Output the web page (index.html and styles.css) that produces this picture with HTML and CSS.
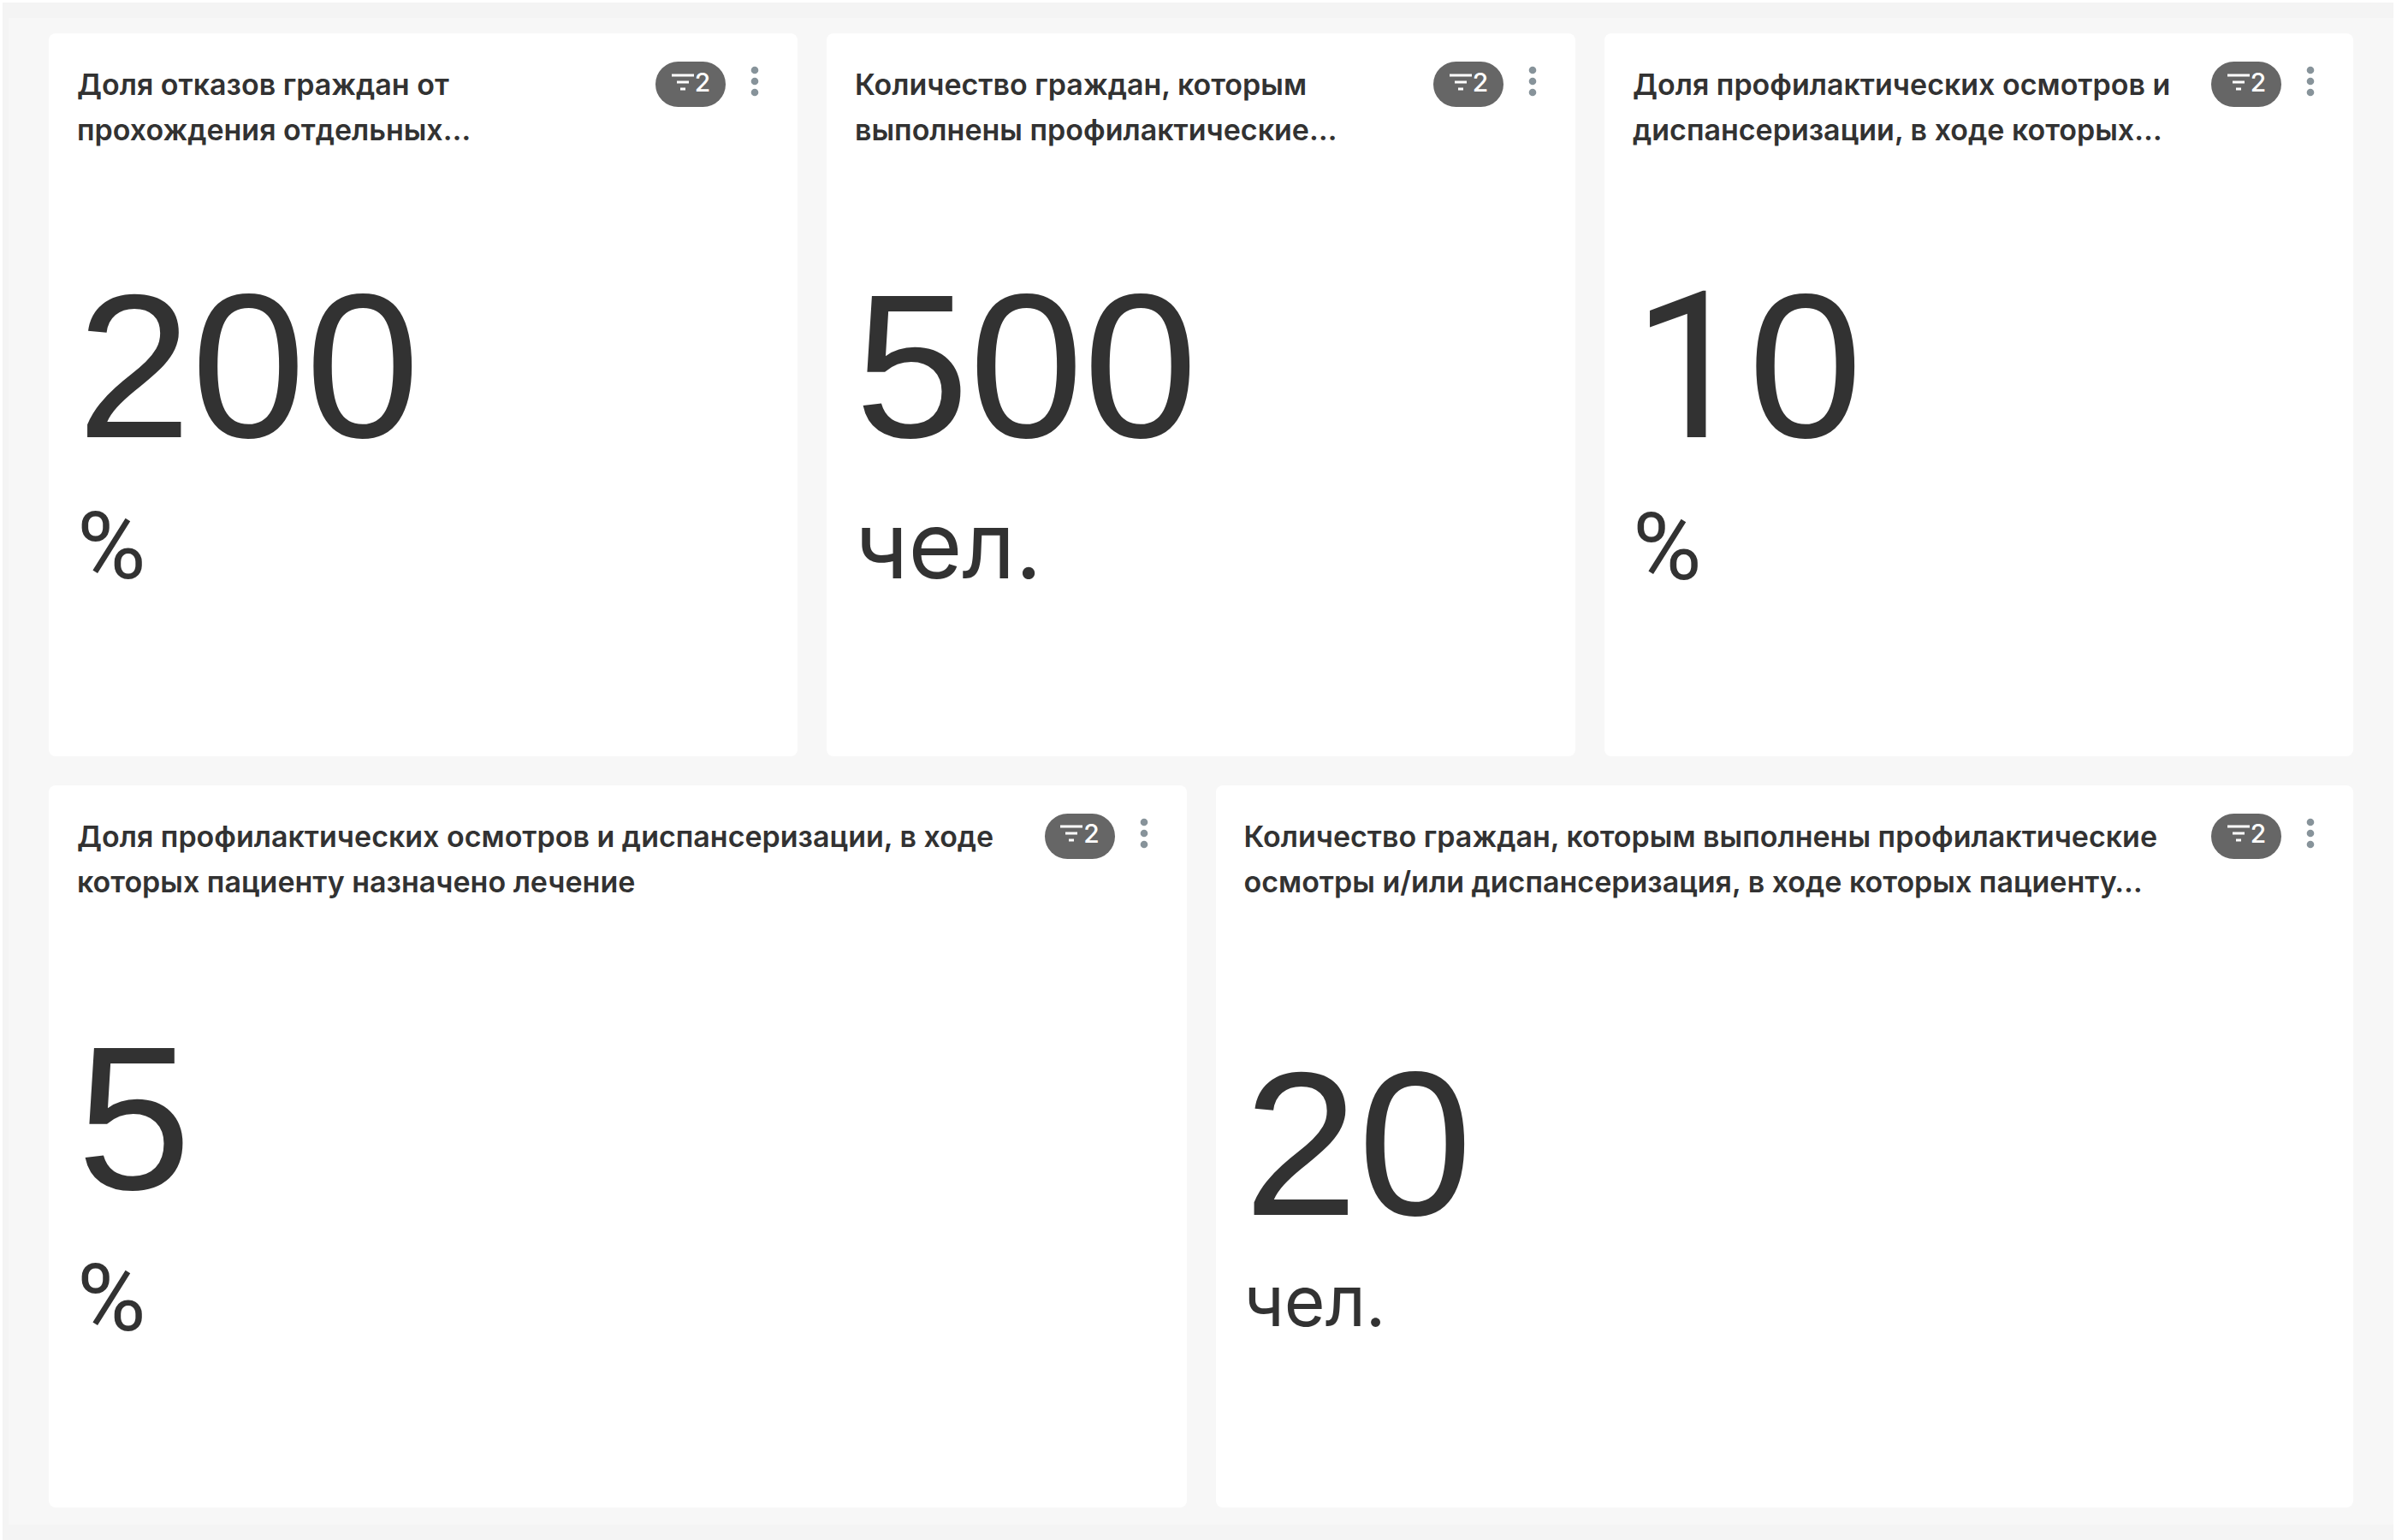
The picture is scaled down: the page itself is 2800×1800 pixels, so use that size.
FILE: index.html
```html
<!DOCTYPE html>
<html lang="ru">
<head>
<meta charset="utf-8">
<meta name="viewport" content="width=device-width, initial-scale=1">
<title>Показатели диспансеризации</title>
<link rel="stylesheet" href="styles.css">
</head>
<body>
<svg class="sprite" aria-hidden="true">
  <symbol id="filter" viewBox="0 0 28 22">
    <path d="M1 3H27M7 11H21M11 19H17" fill="none" stroke="currentColor" stroke-width="3"/>
  </symbol>
  <symbol id="more" viewBox="0 0 10 36">
    <circle cx="5" cy="5" r="4.3"/><circle cx="5" cy="18" r="4.3"/><circle cx="5" cy="31" r="4.3"/>
  </symbol>
</svg>
<div class="frame">
<main class="dashboard">
  <article class="card">
    <header class="card-header">
      <h2 class="card-title">Доля отказов граждан от прохождения отдельных…</h2>
      <button class="badge" type="button" aria-label="Фильтры: 2"><svg class="badge-icon"><use href="#filter"/></svg>2</button>
      <button class="menu" type="button" aria-label="Меню"><svg class="menu-icon"><use href="#more"/></svg></button>
    </header>
    <p class="value">200</p>
    <p class="unit unit-percent">%</p>
  </article>
  <article class="card">
    <header class="card-header">
      <h2 class="card-title">Количество граждан, которым выполнены профилактические…</h2>
      <button class="badge" type="button" aria-label="Фильтры: 2"><svg class="badge-icon"><use href="#filter"/></svg>2</button>
      <button class="menu" type="button" aria-label="Меню"><svg class="menu-icon"><use href="#more"/></svg></button>
    </header>
    <p class="value">500</p>
    <p class="unit">чел.</p>
  </article>
  <article class="card">
    <header class="card-header">
      <h2 class="card-title">Доля профилактических осмотров и диспансеризации, в ходе которых…</h2>
      <button class="badge" type="button" aria-label="Фильтры: 2"><svg class="badge-icon"><use href="#filter"/></svg>2</button>
      <button class="menu" type="button" aria-label="Меню"><svg class="menu-icon"><use href="#more"/></svg></button>
    </header>
    <p class="value"><span class="digit-one">1</span>0</p>
    <p class="unit unit-percent">%</p>
  </article>
  <article class="card card-wide">
    <header class="card-header">
      <h2 class="card-title">Доля профилактических осмотров и диспансеризации, в ходе которых пациенту назначено лечение</h2>
      <button class="badge" type="button" aria-label="Фильтры: 2"><svg class="badge-icon"><use href="#filter"/></svg>2</button>
      <button class="menu" type="button" aria-label="Меню"><svg class="menu-icon"><use href="#more"/></svg></button>
    </header>
    <p class="value">5</p>
    <p class="unit unit-percent">%</p>
  </article>
  <article class="card card-wide card-compact">
    <header class="card-header">
      <h2 class="card-title">Количество граждан, которым выполнены профилактические осмотры и/или диспансеризация, в ходе которых пациенту…</h2>
      <button class="badge" type="button" aria-label="Фильтры: 2"><svg class="badge-icon"><use href="#filter"/></svg>2</button>
      <button class="menu" type="button" aria-label="Меню"><svg class="menu-icon"><use href="#more"/></svg></button>
    </header>
    <p class="value">20</p>
    <p class="unit">чел.</p>
  </article>
</main>
</div>
</body>
</html>
```

FILE: styles.css
```css
* {
  box-sizing: border-box;
}

body {
  margin: 0;
  background: #fff;
  color: #323232;
  font-family: Inter, "Noto Sans", sans-serif;
}

.sprite {
  display: none;
}

.frame {
  display: flex;
  min-height: 100vh;
  padding: 18px 0 18px 7px;
  background: #f4f4f4;
  border: 3px solid #fff;
  border-bottom: 0;
}

.dashboard {
  flex: 1;
  display: grid;
  grid-template-columns: repeat(6, 1fr);
  grid-auto-rows: 1fr;
  gap: 34px;
  padding: 18px 47px 20px;
  background: #f7f7f7;
}

.card {
  grid-column: span 2;
  padding: 33px 32px 33px 33px;
  background: #fff;
  border-radius: 8px;
}

.card-wide {
  grid-column: span 3;
}

.card-header {
  display: flex;
  align-items: flex-start;
  min-height: 106px;
}

.card-title {
  flex: 1;
  margin: 0;
  font-size: 34px;
  font-weight: 600;
  line-height: 53px;
}

.badge {
  display: flex;
  align-items: center;
  justify-content: center;
  width: 82px;
  height: 53px;
  margin-left: 32px;
  padding: 0 0 6px;
  border: 0;
  border-radius: 27px;
  background: #666;
  color: #fff;
  font: 500 30px/30px Inter, sans-serif;
}

.badge-icon {
  width: 28px;
  height: 22px;
}

.menu {
  display: flex;
  justify-content: center;
  width: 36px;
  margin-left: 16px;
  padding: 5px 0 0;
  border: 0;
  background: none;
}

.menu-icon {
  width: 10px;
  height: 36px;
  fill: #87939a;
}

.value {
  margin: 130px 0 0;
  font: 240px/240px "Liberation Sans", Arial, sans-serif;
}

.digit-one {
  font-family: Roboto, "Liberation Sans", sans-serif;
}

.unit {
  margin: 35px 0 0;
  font-size: 108px;
  line-height: 108px;
}

.unit-percent {
  font-family: Roboto, "Noto Sans", sans-serif;
  font-size: 110px;
  line-height: 112px;
}

.card-compact .value {
  margin-top: 160px;
}

.card-compact .unit {
  margin-top: 23px;
  font-size: 82px;
  line-height: 82px;
}
```
